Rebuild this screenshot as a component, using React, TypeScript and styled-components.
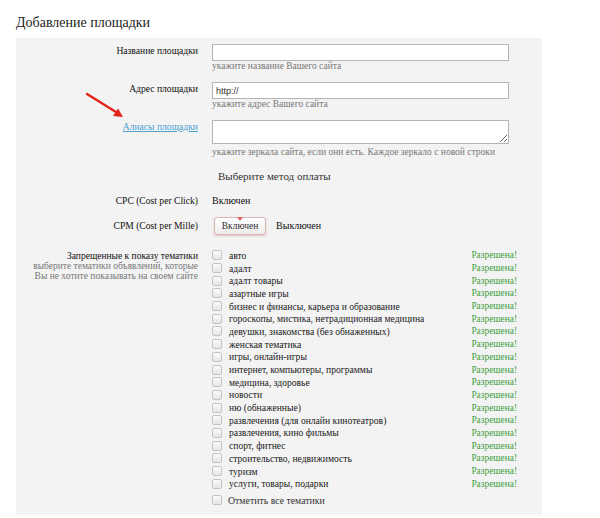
import React from "react";
import styled, { createGlobalStyle } from "styled-components";

const serif = `"Liberation Serif", "Times New Roman", serif`;

const GlobalStyle = createGlobalStyle`
  html, body {
    margin: 0;
    padding: 0;
    background: #fff;
  }
  body {
    font-family: "Liberation Serif", "Times New Roman", serif;
    color: #222;
  }
`;

const Page = styled.div`
  width: 600px;
  height: 518px;
  overflow: hidden;
  padding: 0 0 0 16px;
  box-sizing: border-box;
  font-family: ${serif};
`;

const Title = styled.h1`
  margin: 0;
  padding-top: 14px;
  height: 38px;
  box-sizing: border-box;
  font-family: ${serif};
  font-size: 14px;
  font-weight: normal;
  line-height: 18px;
  color: #222;
`;

const Panel = styled.div`
  position: relative;
  width: 526px;
  background: #f3f3f3;
  padding: 6px 0 8px 0;
  box-sizing: border-box;
  font-family: ${serif};
`;

const Row = styled.div<{ $mb?: number }>`
  display: grid;
  grid-template-columns: 182px 1fr;
  column-gap: 14px;
  margin-bottom: ${(p) => (p.$mb ?? 0)}px;
`;

const Label = styled.div<{ $link?: boolean; $lh?: number }>`
  text-align: right;
  font-family: ${serif};
  font-size: 9.6px;
  line-height: ${(p) => (p.$lh ?? 14)}px;
  color: ${(p) => (p.$link ? "#4aa2d2" : "#111")};
  text-decoration: ${(p) => (p.$link ? "underline" : "none")};
`;

const Field = styled.div`
  display: flex;
  flex-direction: column;
`;

const TextInput = styled.input`
  width: 297px;
  height: 17px;
  box-sizing: border-box;
  border: 1px solid #b5b5b5;
  background: #fff;
  margin: 0;
  padding: 0 3px;
  font-family: "Liberation Sans", Arial, sans-serif;
  font-size: 9px;
  color: #333;
  outline: none;
`;

const TextArea = styled.textarea`
  width: 297px;
  height: 24px;
  box-sizing: border-box;
  border: 1px solid #b5b5b5;
  background: #fff;
  margin: 0;
  padding: 2px 3px;
  font-family: "Liberation Sans", Arial, sans-serif;
  font-size: 9px;
  outline: none;
  display: block;
`;

const Hint = styled.div<{ $mt?: number }>`
  font-family: ${serif};
  font-size: 9.5px;
  line-height: 11px;
  color: #777;
  margin-top: ${(p) => (p.$mt ?? 0)}px;
  white-space: nowrap;
`;

const Section = styled.div`
  padding-left: 202px;
  font-family: ${serif};
  font-size: 11px;
  line-height: 16px;
  color: #333;
  margin-bottom: 9px;
`;

const ValueRow = styled.div`
  display: flex;
  align-items: center;
  gap: 10px;
  font-family: ${serif};
  font-size: 10px;
  line-height: 16px;
  color: #111;
`;

const Toggle = styled.button`
  position: relative;
  height: 18px;
  width: 52px;
  margin: 0 0 0 2px;
  padding: 0;
  border: 1px solid #dbb3b3;
  border-radius: 3px;
  background: linear-gradient(#ffffff, #ececec);
  box-shadow: 0 1px 2px rgba(180, 80, 80, 0.35);
  font-family: ${serif};
  font-size: 9.5px;
  color: #333;
  &::before {
    content: "";
    position: absolute;
    top: -1px;
    left: 50%;
    margin-left: -3px;
    border-left: 3px solid transparent;
    border-right: 3px solid transparent;
    border-top: 4px solid #e06060;
  }
`;

const ThemeLabel = styled.div`
  text-align: right;
  font-family: ${serif};
  font-size: 9.5px;
  line-height: 12px;
  color: #111;
  padding-top: 1px;
  & > span {
    display: block;
    font-size: 9.5px;
    line-height: 9.5px;
    color: #777;
  }
`;

const ThemeList = styled.div`
  width: 305px;
`;

const ThemeItem = styled.label`
  display: flex;
  align-items: center;
  height: 12.7px;
  font-family: ${serif};
  font-size: 9.6px;
  color: #1a1a1a;
  & > em {
    font-style: normal;
    margin-left: auto;
    font-size: 9.4px;
    color: #3f9e3f;
  }
`;

const Box = styled.span<{ $mr?: number }>`
  display: inline-block;
  width: 8px;
  height: 8px;
  border: 1px solid #c4c4c4;
  border-radius: 2px;
  background: linear-gradient(#fafafa, #e6e6e6);
  margin-right: ${(p) => (p.$mr ?? 7)}px;
  flex: none;
`;

const CheckAll = styled.label`
  display: flex;
  align-items: center;
  margin-top: 3px;
  height: 14px;
  font-family: ${serif};
  font-size: 9.8px;
  color: #333;
`;

const Arrow = styled.svg`
  position: absolute;
  left: 68px;
  top: 53px;
`;

const themes = [
  "авто",
  "адалт",
  "адалт товары",
  "азартные игры",
  "бизнес и финансы, карьера и образование",
  "гороскопы, мистика, нетрадиционная медицина",
  "девушки, знакомства (без обнаженных)",
  "женская тематика",
  "игры, онлайн-игры",
  "интернет, компьютеры, программы",
  "медицина, здоровье",
  "новости",
  "ню (обнаженные)",
  "развлечения (для онлайн кинотеатров)",
  "развлечения, кино фильмы",
  "спорт, фитнес",
  "строительство, недвижимость",
  "туризм",
  "услуги, товары, подарки",
];

export default function App() {
  return (
    <Page>
      <GlobalStyle />
      <Title>Добавление площадки</Title>
      <Panel>
        <Row $mb={10}>
          <Label>Название площадки</Label>
          <Field>
            <TextInput />
            <Hint>укажите название Вашего сайта</Hint>
          </Field>
        </Row>
        <Row $mb={10}>
          <Label>Адрес площадки</Label>
          <Field>
            <TextInput defaultValue="http://" />
            <Hint>укажите адрес Вашего сайта</Hint>
          </Field>
        </Row>
        <Row $mb={10}>
          <Label $link>Алиасы площадки</Label>
          <Field>
            <TextArea />
            <Hint $mt={3}>укажите зеркала сайта, если они есть. Каждое зеркало с новой строки</Hint>
          </Field>
        </Row>
        <Section>Выберите метод оплаты</Section>
        <Row $mb={8}>
          <Label $lh={16}>CPC (Cost per Click)</Label>
          <ValueRow>Включен</ValueRow>
        </Row>
        <Row $mb={14}>
          <Label $lh={18}>CPM (Cost per Mille)</Label>
          <ValueRow>
            <Toggle type="button">Включен</Toggle>
            <span>Выключен</span>
          </ValueRow>
        </Row>
        <Row>
          <ThemeLabel>
            Запрещенные к показу тематики
            <span>выберите тематики объявлений, которые</span>
            <span>Вы не хотите показывать на своем сайте</span>
          </ThemeLabel>
          <ThemeList>
            {themes.map((t) => (
              <ThemeItem key={t}>
                <Box />
                {t}
                <em>Разрешена!</em>
              </ThemeItem>
            ))}
            <CheckAll>
              <Box $mr={6} />
              Отметить все тематики
            </CheckAll>
          </ThemeList>
        </Row>
        <Arrow width="44" height="32" viewBox="0 0 44 32">
          <line x1="3" y1="3" x2="32" y2="21" stroke="#e2231a" strokeWidth="2.4" strokeLinecap="round" />
          <polygon points="39,26 29,25 34,17.4" fill="#e2231a" />
        </Arrow>
      </Panel>
    </Page>
  );
}
